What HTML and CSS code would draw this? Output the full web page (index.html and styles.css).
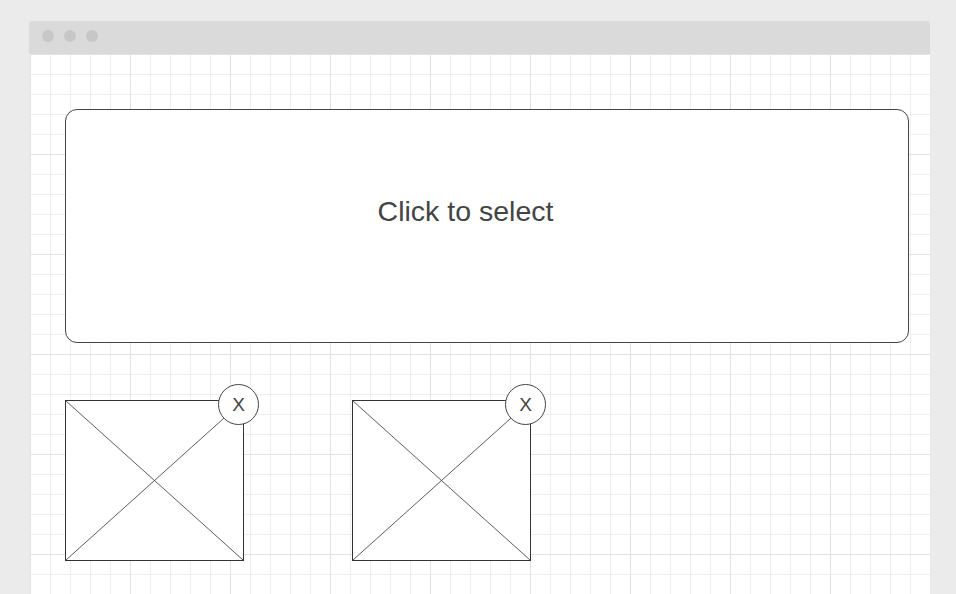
FILE: index.html
```html
<!DOCTYPE html>
<html>
<head>
<meta charset="utf-8">
<link rel="stylesheet" href="styles.css">
</head>
<body>
<div class="window">
  <div class="titlebar">
    <span class="dot"></span><span class="dot"></span><span class="dot"></span>
  </div>
  <div class="canvas">
    <div class="dropzone"><span class="label">Click to select</span></div>
    <div class="thumbs">
      <div class="thumb">
        <svg class="ph" viewBox="0 0 177 159" preserveAspectRatio="none"><line x1="0" y1="0" x2="177" y2="159"/><line x1="177" y1="0" x2="0" y2="159"/></svg>
        <span class="close">X</span>
      </div>
      <div class="thumb">
        <svg class="ph" viewBox="0 0 177 159" preserveAspectRatio="none"><line x1="0" y1="0" x2="177" y2="159"/><line x1="177" y1="0" x2="0" y2="159"/></svg>
        <span class="close">X</span>
      </div>
    </div>
  </div>
</div>
</body>
</html>
```
FILE: styles.css
```css
html, body { margin: 0; padding: 0; }
body {
  background: #ebebeb;
  font-family: "Liberation Sans", Arial, sans-serif;
  overflow: hidden;
  height: 594px;
}
.window {
  margin: 21px 0 0 29px;
  width: 901px;
  border-radius: 4px 4px 0 0;
  overflow: hidden;
}
.titlebar {
  height: 33px;
  box-sizing: border-box;
  background: #dadada;
  display: flex;
  align-items: flex-start;
  gap: 10px;
  padding: 9px 0 0 13px;
}
.dot {
  width: 12px;
  height: 12px;
  border-radius: 50%;
  background: #c7c7c7;
}
.canvas {
  height: 560px;
  margin-left: 1px;
  background-color: #fff;
  background-image:
    linear-gradient(to right, #e2e2e2 1px, transparent 1px),
    linear-gradient(to bottom, #e2e2e2 1px, transparent 1px),
    linear-gradient(to right, #eeeeee 1px, transparent 1px),
    linear-gradient(to bottom, #eeeeee 1px, transparent 1px);
  background-size: 100px 100px, 100px 100px, 20px 20px, 20px 20px;
  background-position: 0 0;
  padding: 55px 0 0 35px;
  box-sizing: border-box;
}
.dropzone {
  width: 844px;
  height: 234px;
  box-sizing: border-box;
  border: 1px solid #444;
  border-radius: 12px;
  background: #fff;
  display: flex;
  align-items: center;
  justify-content: center;
  padding: 0 43px 29px 0;
}
.label {
  font-size: 28.5px;
  color: #444;
}
.thumbs {
  display: flex;
  gap: 108px;
  margin-top: 57px;
}
.thumb {
  position: relative;
  width: 179px;
  height: 161px;
  box-sizing: border-box;
  border: 1px solid #333;
  background: #fff;
}
.ph {
  display: block;
  width: 177px;
  height: 159px;
}
.ph line { stroke: #333; stroke-width: 0.8; }
.close {
  position: absolute;
  top: -17px;
  right: -16px;
  width: 41px;
  height: 41px;
  box-sizing: border-box;
  border: 1px solid #444;
  border-radius: 50%;
  background: #fff;
  display: flex;
  align-items: center;
  justify-content: center;
  font-size: 19px;
  color: #444;
}
```
